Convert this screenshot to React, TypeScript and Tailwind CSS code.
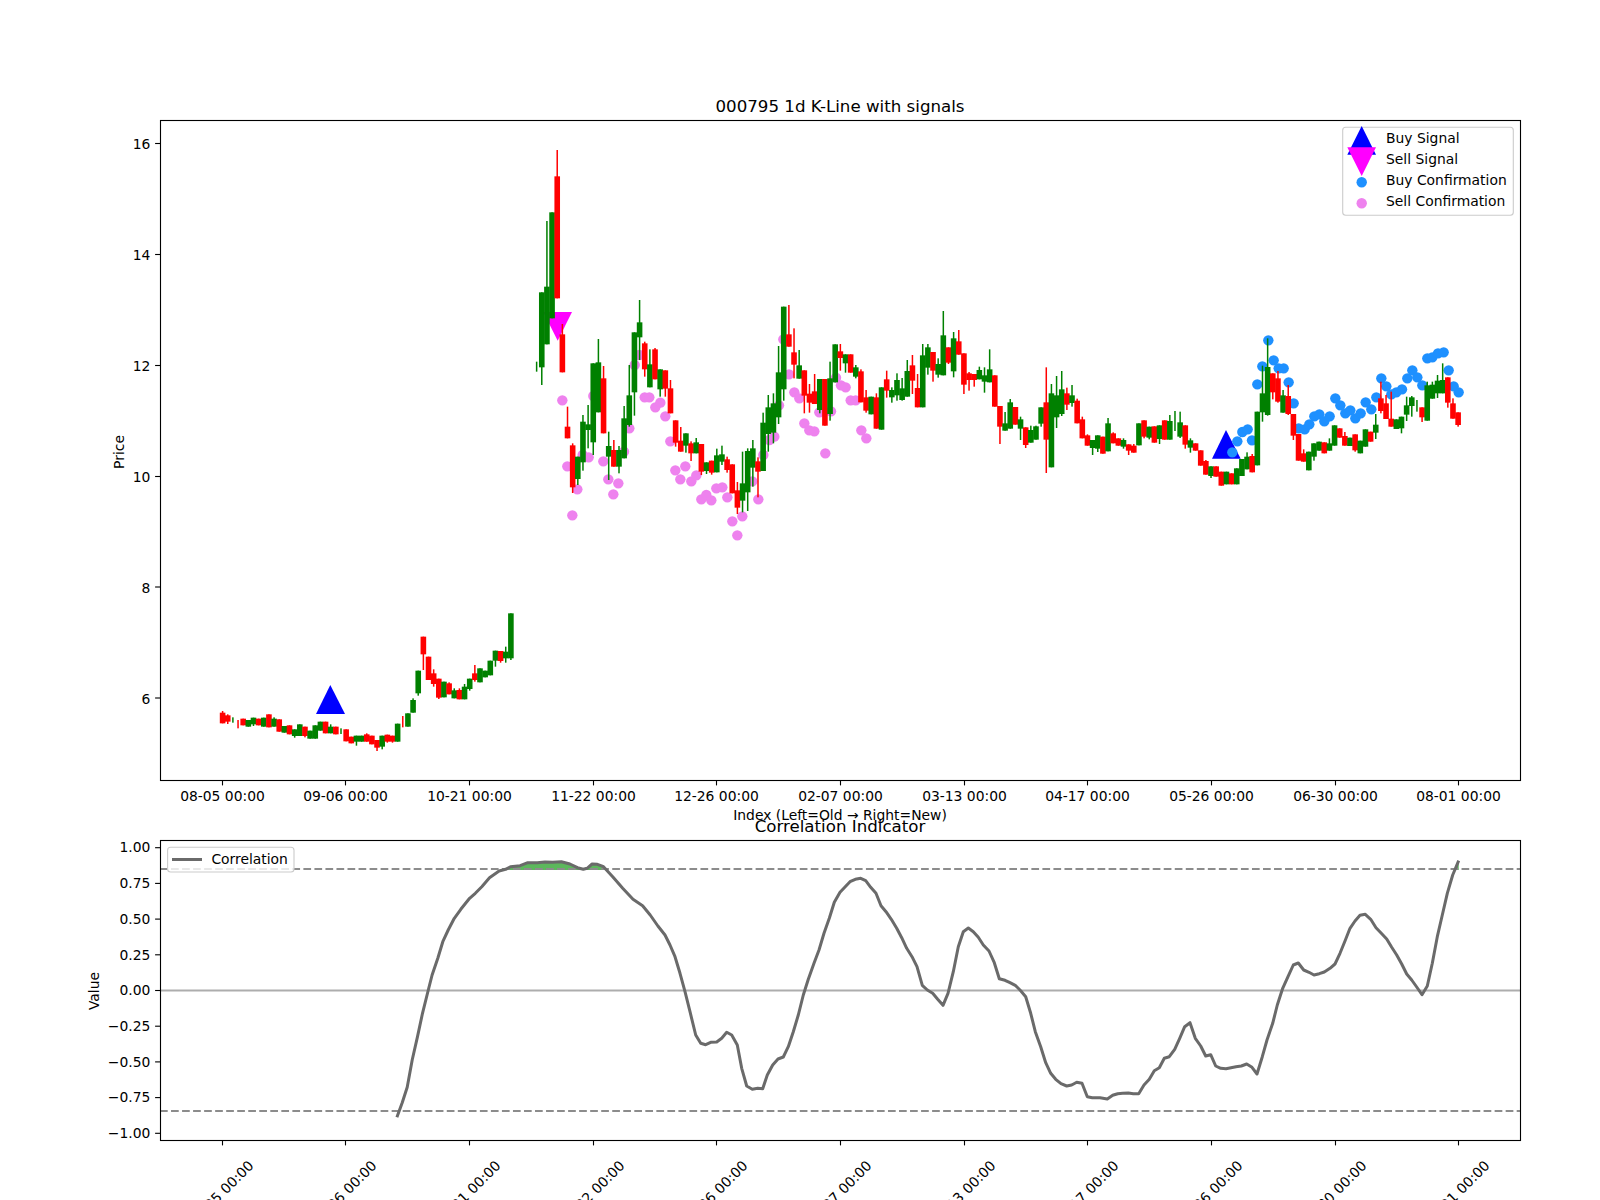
type Candle = [string, number, number, number?, number?]
type Pt = [number, number]

const ACROSS = (i: number) => 222.6 + 5.148 * i
const PRICE_TICKS: [string, number][] = [["16", 143.5], ["14", 254.5], ["12", 365.5], ["10", 476.5], ["8", 587], ["6", 698]]
const VALUE_TICKS = ["1.00", "0.75", "0.50", "0.25", "0.00", "\u22120.25", "\u22120.50", "\u22120.75", "\u22121.00"]
const DATES: [string, number][] = [
  ["08-05", 222.5], ["09-06", 345.5], ["10-21", 469.5], ["11-22", 593.5], ["12-26", 716.5], ["02-07", 840.5],
  ["03-13", 964.5], ["04-17", 1087.5], ["05-26", 1211.5], ["06-30", 1335.5], ["08-01", 1458.5],
]

// read off 3x crops of the chart: [colour, body top, body bottom, wick top, wick bottom], 0 = no wick
const early: Candle[] = [
  ["r",698,730,693],["r",706,725,703,732],["g",720,720,712,728],["r",732,732,720,745],["r",716,736],["g",720,740],["g",713,733,0,738],["r",716,736],
  ["g",713,740],["r",703,742],["g",716,740,712],["r",718,755],["g",738,758],["r",736,763],["g",748,768,0,773],["g",733,768],
  ["r",740,768,0,772],["g",752,776],["g",736,776],["g",725,752],["r",725,760],["g",740,760,733],["r",740,763],["g",753,753,745,762],
  ["r",748,784],["r",770,790],["g",767,785,0,797],["g",767,785],["r",763,785,760],["r",767,793],["r",780,803,0,813],["g",767,800,0,808],
  ["r",764,785,0,788],["r",767,785,0,788],["g",731,785],["r",725,725,708,742],["g",700,740],["g",660,698,655],["g",572,640,0,647],["r",470,523,0,570],
  ["r",530,600],["r",580,612,568,620],["r",596,653,0,657],["g",605,652],["r",610,643,607],["g",631,655,625],["r",630,658,625],["g",620,658,612],
  ["g",596,627,0,632],["r",580,600,555,605],["g",565,607],["g",572,592],["g",542,586],["g",512,542,0,560],["r",513,543,0,548],["g",515,535,500,548],["g",400,535,0,540],
]
const spike: Candle[] = [
  ["g",830,830,815,845],["g",607,832,0,885],["g",590,763,393],["g",367,685],["r",259,625,180],["r",733,847,702],["r",1010,1045,950],["r",1066,1192,1060,1209],
  ["g",1100,1167,0,1185],["g",995,1117,975,1142],["g",1003,1020,945,1075],["g",820,1057,0,1095],["g",817,967,747],["r",865,1030,828],["g",1068,1100,1025,1170],
  ["r",1080,1130,1050],["g",1080,1130,1068,1150],["g",985,1105,948],["g",916,1005,825,1010],["g",727,907,0,977],["g",697,742,630,810],["r",760,838,755,860],["g",823,892,778],
]
const winter: Candle[] = [
  ["r",208,298,204],["g",268,328,0,350],["r",271,326,0,350],["r",325,400,300],["r",421,488,0,500],["r",482,515,441],["g",460,497,0,518],["r",490,520,484,543],
  ["g",487,520,474],["r",492,575,0,585],["g",547,573,0,582],["r",542,578,0,584],["g",526,577,506],["g",523,545,497,555],["r",538,570,530,578],["r",553,640],
  ["r",631,683,606,702],["g",610,662,515,697],["g",513,637,505,693],["g",505,563,480,620],["r",544,575,532,652],["g",428,573,398],["g",382,462,345,515],["g",370,458,340,490],
  ["g",277,412,198,432],["g",80,328,0,362],["r",163,200,75],["r",217,254,145,295],["g",256,296,210],["r",271,347,0,400],["r",341,368,312,398],["r",334,372,282],
  ["g",297,390,0,400],["r",297,437],["g",295,402,245,422],["g",193,307],["r",214,234,192,272],["g",223,250,0,278],["r",223,278],["g",262,290,255,295],
  ["r",274,367,268],["r",352,392,330,398],["g",350,403],["r",352,446,340],["g",322,449],
]
const spring: Candle[] = [
  ["r",268,302,242,323],["g",300,322,292,338],["g",270,316,250,332],["g",295,330,264,332],["g",243,320,210],["r",226,272,195,312],["r",294,352,252],["g",196,352,162],
  ["g",172,233,162,254],["r",186,242,0,275],["g",222,254,205,263],["g",136,256,63],["r",172,218,0,222],["g",145,244,126,262],["r",154,194,120],["r",190,284,0,312],
  ["r",250,270,246,302],["r",252,270,0,290],["g",240,268,230],["g",256,275,232,308],["g",238,277,178],["r",256,350],["r",348,410,0,462],["g",400,422,366],
  ["g",337,416,327],["r",351,404],["g",388,416,380,450],["r",412,465,0,474],["g",420,458,407],["g",409,449,407],["g",352,401,0,410],["r",337,449,232,549],
  ["g",310,532,282],["g",316,382,258,414],["g",298,372,243,378],["r",310,344,293,360],["g",316,339,285,350],["r",332,400,326],["r",388,445,380],["r",436,467,433],
  ["g",450,474,0,495],["g",436,476,0,486],["r",440,491],["g",400,484,384],["r",430,460,427],["r",445,467],["g",450,470,445,476],["r",463,482,0,495],
  ["r",467,488,462],["g",400,466],["r",391,440,0,445],["g",410,443,0,448],["r",409,458],["g",406,447,0,462],["r",391,449],["g",393,449,375],
  ["g",393,393,363,423],["g",397,440,365,444],["r",406,464,0,476],["g",451,473,445,488],["r",460,482],["r",481,527],["r",513,554,510],["g",529,558,0,564],
  ["r",529,560],["r",545,587],["g",545,583],["r",550,583],["g",535,583],
]
const summer: Candle[] = [
  ["g",1047,1098],["g",1040,1078,1027],["r",1038,1087,1032],["g",905,1066],["g",850,907,767,935],["g",771,915,685,917],["r",790,847,0,868],["r",805,875,783,878],
  ["g",856,908,840],["r",858,912,825,915],["r",912,977,0,990],["r",972,1052],["r",1030,1055,1018],["g",1025,1081],["g",1000,1040,0,1052],["g",995,1022],
  ["r",997,1030],["g",1000,1022,985],["g",946,1007],["r",955,983],["r",978,1007,966],["g",983,1008],["r",973,1021,0,1025],["g",992,1030],
  ["g",958,1010],["r",965,995],["g",944,968,912,987],["r",865,903,815,910],["r",880,927,855],["r",926,950,845],["g",928,957],["g",920,955,0,970],
  ["g",886,914,860,933],["g",862,888,858,920],["g",888,888,870,905],["r",892,922,0,936],["g",826,932,815],["g",824,866,815],["g",812,850,795,864],["g",810,850,760],
  ["r",802,878,0,893],["r",880,926,865],["r",907,945,0,950],
]

const fromCrop = (ox: number, oy: number, pts: Pt[], sx = 3): Pt[] => pts.map(([x, y]) => [ox + x / sx, oy + y / 3])

const sellDots = fromCrop(540, 280, [
  [67,361],[82,559],[97,706],[112,628],[128,525],[146,532],[160,348],[190,544],[205,598],[220,643],[235,610],[252,515],[268,445],[284,255],[298,225],
  [314,352],[328,352],[346,382],[361,368],[376,409],[391,484],[406,571],[421,598],[436,559],[454,604],[469,586],[484,658],[499,645],[514,661],[529,625],
  [547,622],[562,652],[577,724],[592,766],[607,709],[637,604],[655,658],[670,525],[688,480],[703,470],[717,376],[730,178],[747,283],[763,337],[778,355],
  [793,430],[808,451],[823,454],[838,397],[856,520],[873,394],[888,293],[903,316],[917,322],[932,361],[947,361],[964,451],[979,475],
])
const buyDots = fromCrop(1200, 110, [
  [97,1027],[112,994],[127,966],[143,958],[156,991],[172,823],[187,769],[205,691],[221,751],[236,775],[251,775],[266,817],[281,880],[296,955],[314,958],
  [328,943],[343,919],[358,913],[373,934],[389,919],[406,865],[421,886],[436,910],[451,901],[466,925],[482,910],[497,877],[514,898],[529,862],[544,805],
  [559,829],[574,853],[589,847],[606,838],[622,805],[637,781],[652,802],[667,826],[682,745],[697,742],[714,730],[731,727],[746,781],[761,829],[776,847],
])

const curve: Pt[] = [
  ...fromCrop(80, 790, [
    [828,982],[842,938],[855,892],[868,810],[882,740],[895,670],[910,600],[920,555],[935,505],[948,455],[962,420],[978,385],[995,358],[1018,325],[1033,310],
    [1050,290],[1070,263],[1095,243],[1112,238],[1125,230],[1150,227],[1170,218],[1195,218],[1215,216],[1235,217],[1258,215],[1280,222],[1300,233],[1315,238],
    [1325,235],[1338,222],[1352,223],[1368,230],[1392,260],[1418,295],[1445,328],[1470,347],[1490,375],[1510,408],
  ], 2.613),
  ...fromCrop(660, 840, [
    [15,285],[30,315],[45,350],[60,400],[75,455],[90,515],[107,585],[122,610],[137,614],[152,607],[170,606],[185,595],[200,577],[215,585],[232,615],[245,685],
    [260,738],[277,748],[293,745],[308,746],[322,705],[338,675],[354,657],[370,651],[385,620],[400,575],[415,525],[430,465],[445,418],[462,370],[477,330],[492,280],
    [508,235],[523,187],[540,157],[555,141],[570,125],[586,118],[602,115],[617,122],[632,142],[648,160],[663,197],[678,215],[694,238],[710,265],[725,293],[740,325],
    [756,350],[771,380],[787,436],[802,450],[818,460],[833,478],[849,496],[864,460],[880,395],[895,320],[910,275],[925,264],[940,275],[955,292],[970,315],[987,333],
    [1003,368],[1018,416],[1035,421],[1050,428],[1067,437],[1082,452],[1097,470],[1112,520],[1126,575],[1142,620],[1157,668],[1172,700],[1187,718],[1203,731],
    [1220,738],[1235,735],[1250,727],[1266,730],[1282,770],[1297,773],
  ]),
  ...fromCrop(1100, 840, [
    [0,773],[22,777],[38,766],[53,761],[68,760],[85,759],[100,761],[116,761],[132,735],[148,718],[163,692],[178,683],[193,655],[208,650],[224,628],[239,595],
    [254,560],[270,548],[286,595],[302,618],[317,648],[332,644],[347,678],[362,685],[378,686],[393,683],[408,680],[424,678],[440,672],[456,682],[471,702],[487,650],
    [501,600],[518,550],[532,495],[548,445],[564,410],[580,375],[595,369],[611,390],[627,397],[642,405],[658,401],[673,396],[690,385],[705,372],[720,340],[735,303],
    [750,265],[765,243],[780,226],[796,223],[812,238],[828,263],[844,280],[860,297],[875,322],[890,345],[905,372],[920,402],[935,420],[950,441],[966,464],[982,438],
    [997,370],[1012,290],[1027,225],[1042,160],[1058,105],[1076,62],
  ]),
]

const join = (pts: Pt[]) => pts.map(([x, y]) => `${x.toFixed(1)},${y.toFixed(1)}`).join(" ")
const overBand = curve.filter(([x]) => x > 495 && x < 610)

function Candles({ rows, start, oy }: { rows: Candle[]; start: number; oy: number }) {
  const y = (v: number) => oy + v / 3
  return (
    <>
      {rows.map(([c, top, bot, wickTop, wickBot], n) => {
        const x = ACROSS(start + n)
        const fill = c === "r" ? "#ff0000" : "#008000"
        return (
          <g key={n}>
            <rect x={x - 0.75} y={y(wickTop || top)} width={1.5} height={y(wickBot || bot) - y(wickTop || top)} fill={fill} />
            {bot > top && <rect x={x - 2.8} y={y(top)} width={5.6} height={y(bot) - y(top)} fill={fill} />}
          </g>
        )
      })}
    </>
  )
}

export default function App() {
  const label = "font-['DejaVu_Sans',sans-serif] text-[13.89px] fill-black"
  const title = "font-['DejaVu_Sans',sans-serif] text-[16.67px] fill-black"

  return (
    <div className="w-[1600px] h-[1200px] bg-white overflow-hidden">
      <svg width={1600} height={1200} viewBox="0 0 1600 1200" className="block">
        {/* Price panel */}
        <text x={840} y={112} textAnchor="middle" className={title}>000795 1d K-Line with signals</text>
        <polygon points="330.3,685 316,714 345,714" fill="#0000ff" />
        <polygon points="1226,430 1212,458.7 1240.7,458.7" fill="#0000ff" />
        <polygon points="543.3,312 572,312 557.7,340.7" fill="#ff00ff" />
        {sellDots.map(([x, y], i) => <circle key={i} cx={x} cy={y} r={5.2} fill="#ee82ee" />)}
        {buyDots.map(([x, y], i) => <circle key={i} cx={x} cy={y} r={5.2} fill="#1e90ff" />)}
        <Candles rows={early} start={0} oy={480} />
        <Candles rows={spike} start={61} oy={90} />
        <Candles rows={winter} start={84} oy={280} />
        <Candles rows={spring} start={129} oy={290} />
        <Candles rows={summer} start={198} oy={110} />
        <rect x={160.5} y={120.5} width={1360} height={660} fill="none" stroke="#000" strokeWidth={1.11} />
        {PRICE_TICKS.map(([t, y]) => (
          <g key={t}>
            <line x1={155.1} x2={160} y1={y} y2={y} stroke="#000" strokeWidth={1.11} />
            <text x={150.3} y={y + 0.5} textAnchor="end" dominantBaseline="central" className={label}>{t}</text>
          </g>
        ))}
        {DATES.map(([d, x]) => (
          <g key={d}>
            <line x1={x} x2={x} y1={780} y2={785.4} stroke="#000" strokeWidth={1.11} />
            <text x={x} y={801} textAnchor="middle" className={label}>{d} 00:00</text>
          </g>
        ))}
        <text x={840} y={820} textAnchor="middle" className={label}>Index (Left=Old → Right=New)</text>
        <text transform="translate(124 452) rotate(-90)" textAnchor="middle" className={label}>Price</text>

        <rect x={1342.7} y={127.3} width={170.6} height={88} rx={3} fill="#fff" fillOpacity={0.8} stroke="#cccccc" strokeWidth={1.11} />
        <polygon points="1361.7,126 1347.3,154.7 1376,154.7" fill="#0000ff" />
        <polygon points="1347.3,147.3 1376,147.3 1361.7,176" fill="#ff00ff" />
        <circle cx={1361.7} cy={182.3} r={5.2} fill="#1e90ff" />
        <circle cx={1361.7} cy={203.3} r={5.2} fill="#ee82ee" />
        <text x={1386} y={143.3} className={label}>Buy Signal</text>
        <text x={1386} y={164.3} className={label}>Sell Signal</text>
        <text x={1386} y={185.2} className={label}>Buy Confirmation</text>
        <text x={1386} y={206.1} className={label}>Sell Confirmation</text>

        {/* Correlation panel */}
        <text x={840} y={832} textAnchor="middle" className={title}>Correlation Indicator</text>
        <line x1={160} x2={1520} y1={990.5} y2={990.5} stroke="#adadad" strokeWidth={2.08} />
        <polygon points={`${overBand[0][0]},870 ${join(overBand.map(([x, y]) => [x, Math.min(y, 870)] as Pt))} ${overBand[overBand.length - 1][0]},870`} fill="#5cb85c" />
        <polygon points="1455,870 1458.7,861 1458.7,870" fill="#5cb85c" />
        <line x1={160} x2={1520} y1={869} y2={869} stroke="#8c8c8c" strokeWidth={2.08} strokeDasharray="7.7 3.33" />
        <line x1={160} x2={1520} y1={1111} y2={1111} stroke="#8c8c8c" strokeWidth={2.08} strokeDasharray="7.7 3.33" />
        <polyline points={join(curve)} fill="none" stroke="#6a6a6a" strokeWidth={3} strokeLinejoin="round" />
        <rect x={160.5} y={840.5} width={1360} height={300} fill="none" stroke="#000" strokeWidth={1.11} />
        {VALUE_TICKS.map((t, i) => {
          const y = 847.7 + i * 35.7
          return (
            <g key={t}>
              <line x1={155.1} x2={160} y1={y} y2={y} stroke="#000" strokeWidth={1.11} />
              <text x={150.3} y={y - 0.3} textAnchor="end" dominantBaseline="central" className={label}>{t}</text>
            </g>
          )
        })}
        {DATES.map(([d, x]) => (
          <g key={d}>
            <line x1={x} x2={x} y1={1140} y2={1145.4} stroke="#000" strokeWidth={1.11} />
            <text transform={`translate(${x - 1.5} 1193) rotate(-45)`} textAnchor="middle" dominantBaseline="central" className={label}>{d} 00:00</text>
          </g>
        ))}
        <text transform="translate(99 991) rotate(-90)" textAnchor="middle" className={label}>Value</text>

        <rect x={167.6} y={847.3} width={126.4} height={24.7} rx={3} fill="#fff" fillOpacity={0.8} stroke="#cccccc" strokeWidth={1.11} />
        <line x1={172} x2={202} y1={859.5} y2={859.5} stroke="#6a6a6a" strokeWidth={3} />
        <text x={211.4} y={863.8} className={label}>Correlation</text>
      </svg>
    </div>
  )
}
